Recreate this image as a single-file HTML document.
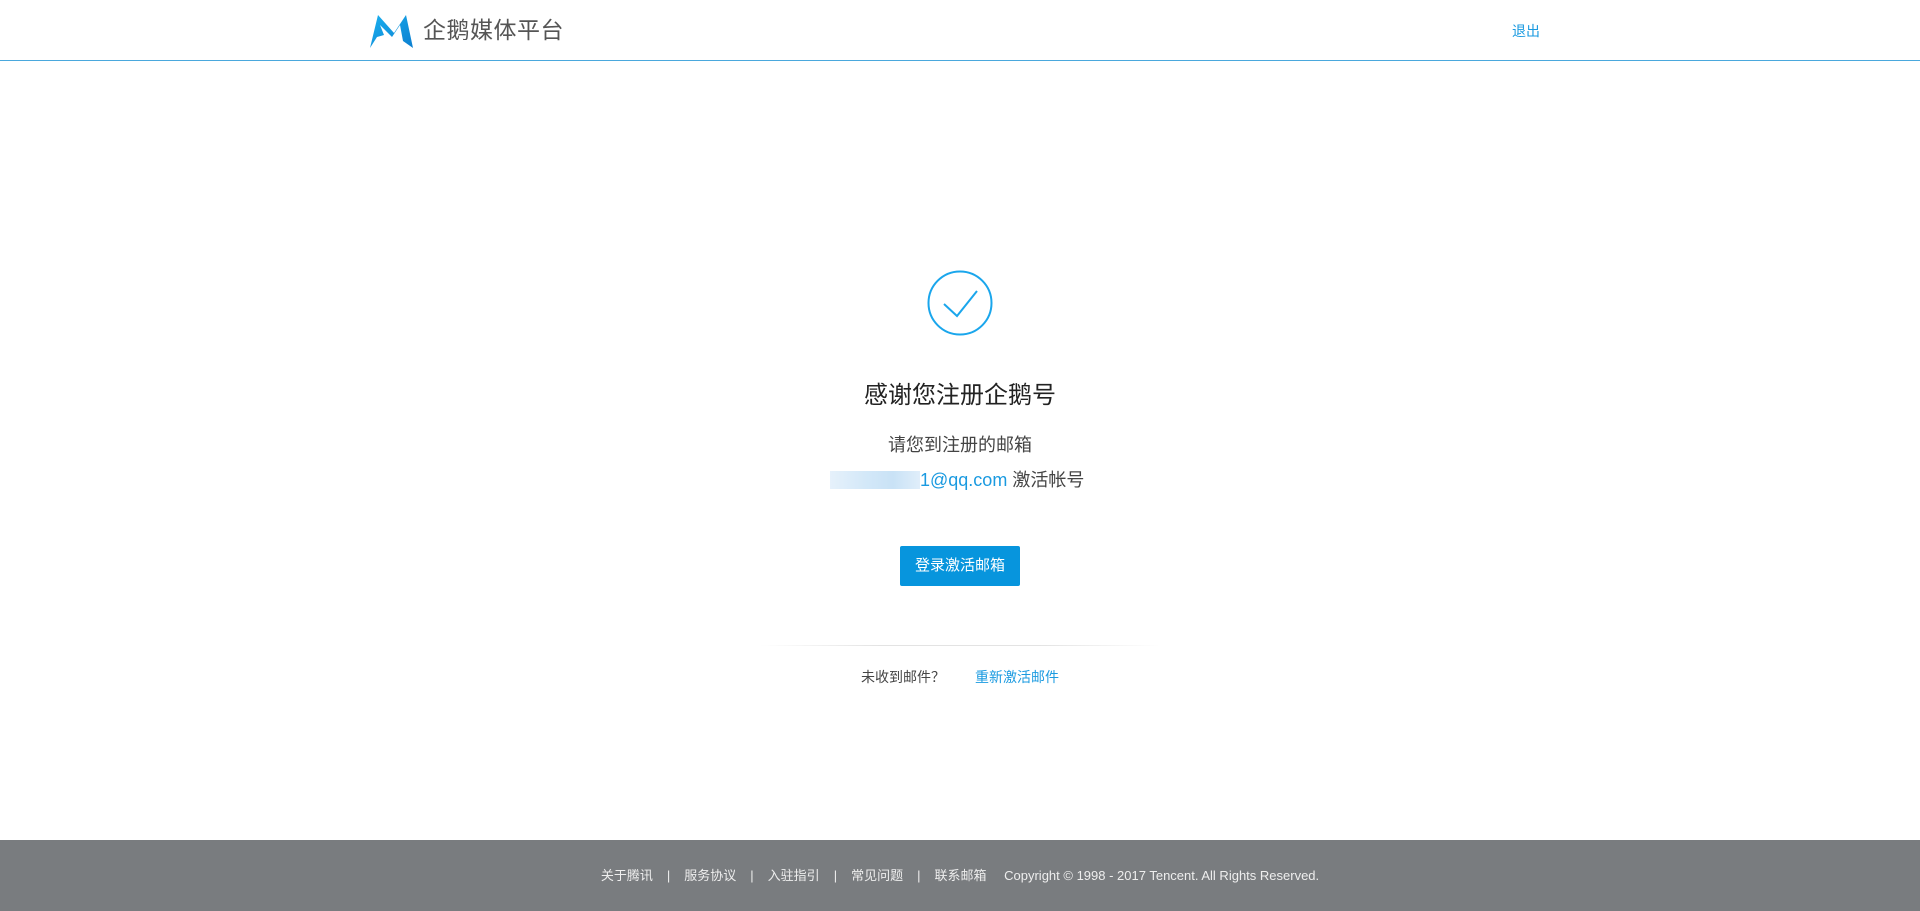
<!DOCTYPE html>
<html><head><meta charset="utf-8"><style>
*{margin:0;padding:0;box-sizing:border-box}
body{width:1920px;height:911px;position:relative;background:#fff;font-family:"Liberation Sans","Noto Sans CJK SC",sans-serif;overflow:hidden}
.hdr{position:absolute;left:0;top:0;width:1920px;height:61px;border-bottom:1px solid #4aa8dd}
.logo{position:absolute;left:370px;top:13px}
.lt{position:absolute;left:423px;top:13px;font-size:23px;color:#555;letter-spacing:0.5px;line-height:34px}
.out{position:absolute;left:1512px;top:21px;font-size:14px;color:#1a9ae0;line-height:20px}
.c{position:absolute;left:0;width:1920px;text-align:center}
.btn{position:absolute;left:900px;top:546px;width:120px;height:40px;background:#0795dd;border-radius:2px;color:#fff;font-size:15px;line-height:40px;text-align:center}
.div{position:absolute;left:760px;top:645px;width:400px;height:1px;background:linear-gradient(90deg,rgba(230,230,230,0),#e3e3e3 30%,#e3e3e3 70%,rgba(230,230,230,0))}
.ft{position:absolute;left:0;top:840px;width:1920px;height:71px;background:#797c7f;color:#eee;font-size:13px;line-height:71px;text-align:center}
.ft span{margin:0 14px}
</style></head><body>
<div class="hdr">
<svg class="logo" width="44" height="36" viewBox="0 0 44 36"><defs><linearGradient id="g" x1="0" y1="0" x2="1" y2="1"><stop offset="0" stop-color="#1ab0ef"/><stop offset="1" stop-color="#0d7fd0"/></linearGradient></defs>
<path d="M0 35 L8 2 L24 20 L36 2 L43 35 L33 28 L30 12 L22 24 L10 12 L14 22 L7 24 Z" fill="url(#g)"/></svg>
<div class="lt">企鹅媒体平台</div>
<div class="out">退出</div>
</div>
<svg style="position:absolute;left:927px;top:270px" width="66" height="66" viewBox="0 0 66 66"><circle cx="33" cy="33" r="31.5" fill="none" stroke="#1aa6ec" stroke-width="2"/><path d="M17 34 L30 46 L50 21" fill="none" stroke="#1aa6ec" stroke-width="2"/></svg>
<div class="c" style="top:381px;font-size:24px;line-height:30px;color:#222">感谢您注册企鹅号</div>
<div class="c" style="top:433px;font-size:18px;line-height:24px;color:#444">请您到注册的邮箱</div>
<div style="position:absolute;left:830px;top:468px;font-size:18px;line-height:24px;color:#444;white-space:nowrap"><span style="display:inline-block;width:90px;height:18px;vertical-align:-3px;background:linear-gradient(90deg,#e6f1fb,#d3e8f8 40%,#c9e2f6 70%,#e0eefa)"></span><span style="color:#1a9ae0">1@qq.com</span> 激活帐号</div>
<div class="btn">登录激活邮箱</div>
<div class="div"></div>
<div style="position:absolute;left:861px;top:667px;font-size:14px;line-height:20px;color:#444">未收到邮件？</div>
<div style="position:absolute;left:975px;top:667px;font-size:14px;line-height:20px;color:#1a9ae0">重新激活邮件</div>
<div class="ft">关于腾讯<span>|</span>服务协议<span>|</span>入驻指引<span>|</span>常见问题<span>|</span>联系邮箱<span style="margin-right:0">&nbsp;</span>Copyright © 1998 - 2017 Tencent. All Rights Reserved.</div>
</body></html>
